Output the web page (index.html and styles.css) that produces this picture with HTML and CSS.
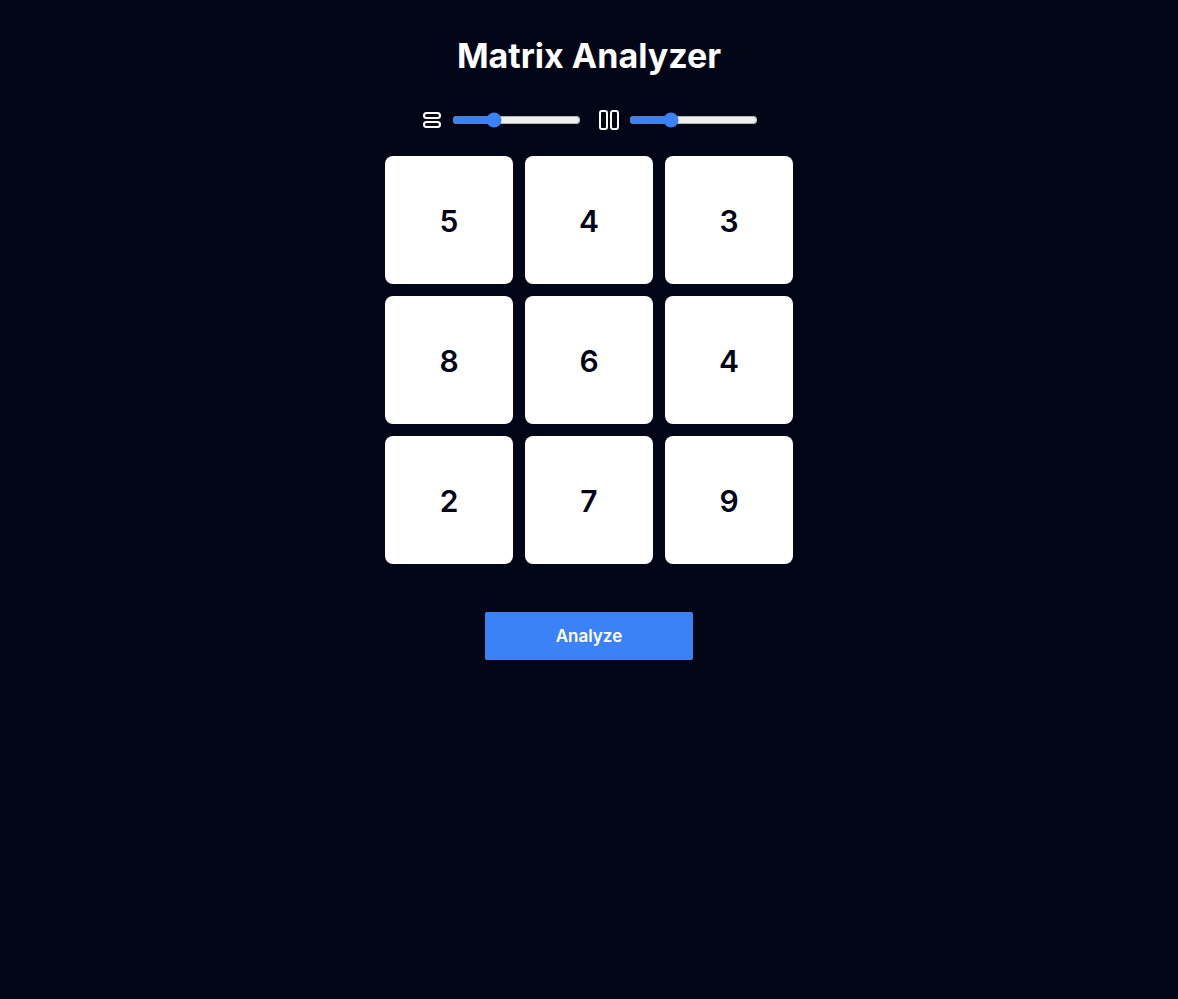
FILE: index.html
```html
<!DOCTYPE html>
<html lang="en">
<head>
<meta charset="utf-8">
<meta name="viewport" content="width=device-width, initial-scale=1">
<title>Matrix Analyzer</title>
<link rel="stylesheet" href="styles.css">
</head>
<body>
<main class="page">
  <h1 class="title">Matrix Analyzer</h1>
  <form class="analyzer">
    <div class="controls">
      <label class="control">
        <svg class="icon" viewBox="0 0 24 24" role="img" aria-label="Rows">
          <rect x="4" y="5" width="16" height="5" rx="2.5"/>
          <rect x="4" y="14" width="16" height="5" rx="2.5"/>
        </svg>
        <input class="slider" type="range" min="0" max="10" value="3">
      </label>
      <label class="control">
        <svg class="icon" viewBox="0 0 24 24" role="img" aria-label="Columns">
          <rect x="3" y="3" width="7" height="18" rx="2"/>
          <rect x="14" y="3" width="7" height="18" rx="2"/>
        </svg>
        <input class="slider" type="range" min="0" max="10" value="3">
      </label>
    </div>
    <div class="matrix">
      <input class="cell" type="text" inputmode="numeric" aria-label="Row 1, column 1" value="5">
      <input class="cell" type="text" inputmode="numeric" aria-label="Row 1, column 2" value="4">
      <input class="cell" type="text" inputmode="numeric" aria-label="Row 1, column 3" value="3">
      <input class="cell" type="text" inputmode="numeric" aria-label="Row 2, column 1" value="8">
      <input class="cell" type="text" inputmode="numeric" aria-label="Row 2, column 2" value="6">
      <input class="cell" type="text" inputmode="numeric" aria-label="Row 2, column 3" value="4">
      <input class="cell" type="text" inputmode="numeric" aria-label="Row 3, column 1" value="2">
      <input class="cell" type="text" inputmode="numeric" aria-label="Row 3, column 2" value="7">
      <input class="cell" type="text" inputmode="numeric" aria-label="Row 3, column 3" value="9">
    </div>
    <button class="analyze" type="button">Analyze</button>
  </form>
</main>
</body>
</html>
```
FILE: styles.css
```css
*, *::before, *::after {
  box-sizing: border-box;
}

body {
  margin: 0;
  min-height: 100vh;
  background: #020617;
  color: #fff;
  font-family: Inter, "Liberation Sans", sans-serif;
}

.page {
  display: flex;
  flex-direction: column;
  align-items: center;
  padding: 36px 16px;
}

.title {
  margin: 0 0 32px;
  font-size: 34px;
  line-height: 40px;
  font-weight: 700;
}

.analyzer {
  display: flex;
  flex-direction: column;
  align-items: center;
}

.controls {
  display: flex;
  flex-wrap: wrap;
  justify-content: center;
  gap: 16px;
  margin-bottom: 24px;
}

.control {
  display: flex;
  align-items: center;
  gap: 8px;
}

.icon {
  width: 24px;
  height: 24px;
  fill: none;
  stroke: currentColor;
  stroke-width: 2;
}

.slider {
  width: 129px;
  margin: 0;
  accent-color: #3b82f6;
}

.matrix {
  display: grid;
  grid-template-columns: repeat(3, 128px);
  gap: 12px;
}

.cell {
  width: 100%;
  aspect-ratio: 1;
  padding: 2px 0 0;
  border: 0;
  border-radius: 8px;
  background: #fff;
  color: #020617;
  font-family: inherit;
  font-size: 30px;
  font-weight: 600;
  text-align: center;
}

.analyze {
  width: 208px;
  height: 48px;
  margin-top: 48px;
  border: 0;
  border-radius: 2px;
  background: #3b82f6;
  color: #fff;
  font-family: inherit;
  font-size: 17px;
  font-weight: 600;
}
```
